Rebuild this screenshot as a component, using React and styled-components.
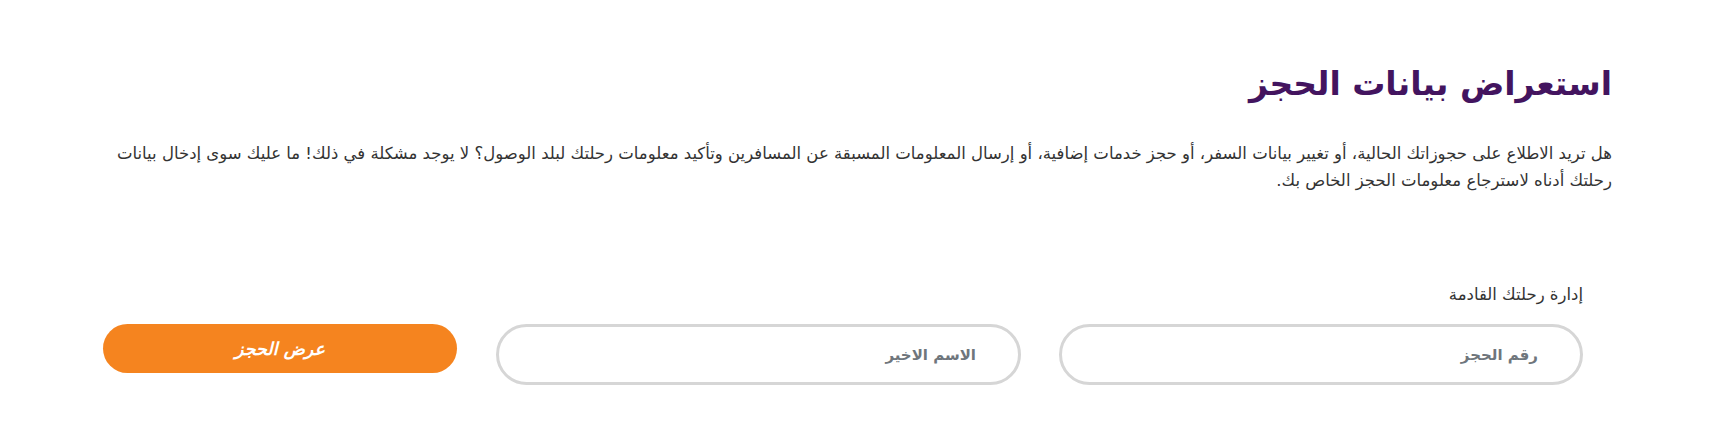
import React from 'react';
import styled, { createGlobalStyle } from 'styled-components';

const GlobalStyle = createGlobalStyle`
  html, body {
    margin: 0;
    padding: 0;
    background: #fff;
  }
  body {
    font-family: "DejaVu Sans", "Noto Sans", sans-serif;
  }
  * {
    box-sizing: border-box;
  }
`;

const Page = styled.div`
  direction: rtl;
  padding: 52px 99px 40px 103px;
  color: #333;
`;

const Title = styled.h1`
  font-size: 33px;
  font-weight: 700;
  color: #43145f;
  margin: 0 0 24px;
  line-height: 64px;
`;

const Intro = styled.p`
  font-size: 16.5px;
  line-height: 27px;
  color: #333;
  margin: 0;
`;

const FormSection = styled.div`
  margin-top: 91px;
  padding-right: 29px;
`;

const Label = styled.div`
  font-size: 16.5px;
  line-height: 20px;
  color: #333;
  margin-bottom: 19px;
`;

const Row = styled.div`
  display: flex;
  align-items: flex-start;
  gap: 38px;
`;

const Field = styled.input`
  width: ${({ $width }) => $width}px;
  height: 61px;
  border: 3px solid #d6d6d6;
  border-radius: 31px;
  padding: 0 42px;
  font-family: inherit;
  font-size: 15px;
  font-weight: 700;
  color: #333;
  background: #fff;
  outline: none;
  direction: rtl;

  &::placeholder {
    color: #6f767c;
  }
`;

const SubmitButton = styled.button`
  width: 354px;
  height: 49px;
  margin-right: 1px;
  border: none;
  border-radius: 25px;
  background: #f5841f;
  color: #fff;
  font-family: inherit;
  font-size: 17.5px;
  font-weight: 700;
  font-style: italic;
  cursor: pointer;
`;

export default function App() {
  return (
    <>
      <GlobalStyle />
      <Page>
        <Title>استعراض بيانات الحجز</Title>
        <Intro>
          هل تريد الاطلاع على حجوزاتك الحالية، أو تغيير بيانات السفر، أو حجز خدمات إضافية، أو إرسال المعلومات المسبقة عن المسافرين وتأكيد معلومات رحلتك لبلد الوصول؟ لا يوجد مشكلة في ذلك! ما عليك سوى إدخال بيانات رحلتك أدناه لاسترجاع معلومات الحجز الخاص بك.
        </Intro>
        <FormSection>
          <Label>إدارة رحلتك القادمة</Label>
          <Row>
            <Field $width={524} placeholder="رقم الحجز" />
            <Field $width={525} placeholder="الاسم الاخير" />
            <SubmitButton>عرض الحجز</SubmitButton>
          </Row>
        </FormSection>
      </Page>
    </>
  );
}
